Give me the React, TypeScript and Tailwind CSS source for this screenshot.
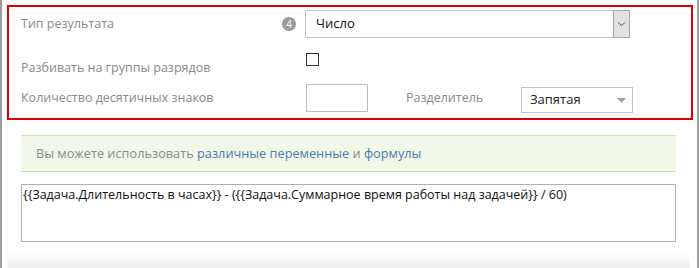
import React from "react";

export default function App() {
  return (
    <div className="relative w-[699px] h-[268px] bg-white overflow-hidden border-x-2 border-[#9c9c9c] font-['Open_Sans',sans-serif] text-[12.5px]">
      <div className="ml-[5px] mt-[5px] w-[686px] border-2 border-[#dd0000] pl-[12px] pt-[3px] pb-[6px]">
        {/* Row 1 */}
        <div className="flex h-[28px] items-center">
          <div className="flex w-[284px] items-center justify-between pr-[9px]">
            <span className="leading-[18px] text-[#8a8a8a]">Тип результата</span>
            <span className="flex h-[14px] w-[14px] items-center justify-center rounded-full bg-[#9a9a9a] text-[10px] leading-none text-white">4</span>
          </div>
          <div className="flex h-[28px] w-[325px] items-stretch border border-[#c4c4c4] bg-white">
            <span className="flex flex-1 items-center pl-[10px] text-[13px] text-[#111]">Число</span>
            <span className="flex w-[17px] items-center justify-center border border-[#a8a8a8] bg-[#e1e1e1] -my-px -mr-px">
              <svg width="9" height="6" viewBox="0 0 9 6">
                <polyline points="1,1.5 4.5,4.5 8,1.5" fill="none" stroke="#555" strokeWidth="1" />
              </svg>
            </span>
          </div>
        </div>
        {/* Row 2 */}
        <div className="mt-[15px] flex h-[23px] items-start">
          <div className="w-[285px] pt-[6px] leading-[18px] text-[#8a8a8a]">Разбивать на группы разрядов</div>
          <div className="h-[13px] w-[13px] border border-[#333]" />
        </div>
        {/* Row 3 */}
        <div className="mt-[8px] flex h-[28px] items-start">
          <div className="flex h-[28px] w-[285px] items-center leading-[18px] text-[#8a8a8a]">Количество десятичных знаков</div>
          <div className="h-[28px] w-[62px] border border-[#bdbdbd]" />
          <div className="ml-[38px] flex h-[28px] w-[115px] items-center leading-[18px] text-[#8a8a8a]">Разделитель</div>
          <div className="mt-[3px] flex h-[26px] w-[112px] items-center justify-between border border-[#c4c4c4] pl-[8px] pr-[6px]">
            <span className="text-[13px] text-[#222]">Запятая</span>
            <svg width="9" height="5" viewBox="0 0 9 5">
              <polygon points="0,0 9,0 4.5,5" fill="#a0a0a0" />
            </svg>
          </div>
        </div>
      </div>

      <div className="ml-[19px] mt-[15px] flex h-[37px] w-[655px] items-center border-y border-[#cfe2b0] bg-[#f2f8e8] pl-[15px] text-[12.75px]">
        <span className="text-[#8a8a8a]">Вы можете использовать&nbsp;</span>
        <span className="text-[#4a7ab3]">различные переменные</span>
        <span className="text-[#8a8a8a]">&nbsp;и&nbsp;</span>
        <span className="text-[#4a7ab3]">формулы</span>
      </div>

      <div className="ml-[19px] mt-[12px] h-[58px] w-[655px] border border-[#b0b0b0] pl-[1px] pt-[1px] leading-[18px] text-[#111]">
        {"{{Задача.Длительность в часах}} - ({{Задача.Суммарное время работы над задачей}} / 60)"}
      </div>

      <div className="absolute bottom-0 left-[6px] h-[16px] w-[682px] bg-gradient-to-b from-white to-[#eeeeee]" />
    </div>
  );
}
